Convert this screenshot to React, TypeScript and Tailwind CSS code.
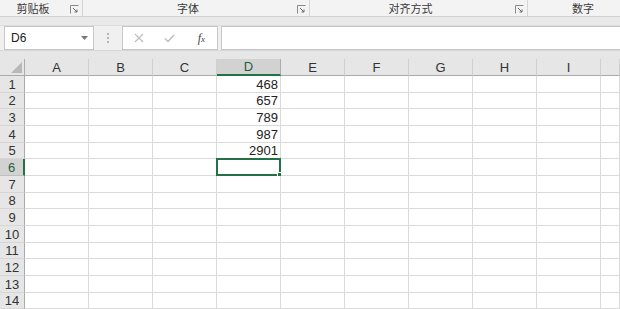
import React from "react";

const cols = ["A", "B", "C", "D", "E", "F", "G", "H", "I", ""];
const rowH = [
  "h-[17px]", "h-[16px]", "h-[17px]", "h-[17px]", "h-[16px]", "h-[17px]", "h-[17px]",
  "h-[16px]", "h-[17px]", "h-[17px]", "h-[16px]", "h-[17px]", "h-[17px]", "h-[16px]",
];
const values: Record<number, string> = { 1: "468", 2: "657", 3: "789", 4: "987", 5: "2901" };

function Launcher() {
  return (
    <svg width="9" height="9" viewBox="0 0 9 9" className="shrink-0">
      <path d="M0.5 8.5V0.5H8.5" fill="none" stroke="#8a8a8a" strokeWidth="1" />
      <path d="M3 3L7 7M7 4.5V7H4.5" fill="none" stroke="#6a6a6a" strokeWidth="1" />
    </svg>
  );
}

function Group({ label, w, launcher = true, last = false }: { label: string; w: string; launcher?: boolean; last?: boolean }) {
  return (
    <div className={`${w} relative flex h-full items-center ${last ? "justify-start pl-[44px]" : "justify-center pr-[16px] border-r border-[#d5d5d5]"}`}>
      <span className="text-[11px] leading-none text-[#3a3a3a]" style={{ fontFamily: '"Noto Sans CJK SC", sans-serif' }}>{label}</span>
      {launcher && (
        <div className="absolute right-[3px] top-[5px]">
          <Launcher />
        </div>
      )}
    </div>
  );
}

export default function App() {
  return (
    <div className="h-[309px] w-[620px] overflow-hidden bg-[#e6e6e6] select-none" style={{ fontFamily: '"Liberation Sans", Arial, sans-serif' }}>
      {/* ribbon group labels */}
      <div className="flex h-[17px] border-b border-[#d2d2d2] bg-[#f3f3f3]">
        <Group label="剪贴板" w="w-[83px]" />
        <Group label="字体" w="w-[227px]" />
        <Group label="对齐方式" w="w-[218px]" />
        <Group label="数字" w="flex-1" launcher={false} last />
      </div>
      <div className="h-[9px] border-b border-[#dcdcdc] bg-[#e9e9e9]" />
      {/* formula bar */}
      <div className="flex h-[24px] items-stretch bg-[#f0f0f0] pl-[4px]">
        <div className="flex w-[90px] items-center justify-between border border-[#c6c6c6] bg-white pl-[6px] pr-[5px]">
          <span className="text-[12px] text-[#222]">D6</span>
          <svg width="7" height="4" viewBox="0 0 7 4"><path d="M0 0H7L3.5 4Z" fill="#777" /></svg>
        </div>
        <div className="flex w-[28px] flex-col items-center justify-center gap-[2px]">
          <div className="h-[2px] w-[2px] bg-[#b5b5b5]" />
          <div className="h-[2px] w-[2px] bg-[#b5b5b5]" />
          <div className="h-[2px] w-[2px] bg-[#b5b5b5]" />
        </div>
        <div className="flex w-[96px] items-center border border-[#c6c6c6] bg-white">
          <div className="flex w-[32px] justify-center">
            <svg width="10" height="10" viewBox="0 0 10 10"><path d="M1 1L9 9M9 1L1 9" stroke="#bdbdbd" strokeWidth="1.2" /></svg>
          </div>
          <div className="flex w-[32px] justify-center">
            <svg width="11" height="9" viewBox="0 0 11 9"><path d="M1 4.5L4 7.5L10 1" fill="none" stroke="#bdbdbd" strokeWidth="1.5" /></svg>
          </div>
          <div className="flex w-[32px] justify-center">
            <span className="text-[12px] italic text-[#444]" style={{ fontFamily: '"Liberation Serif", serif' }}>f<span className="text-[9px]">x</span></span>
          </div>
        </div>
        <div className="ml-[3px] flex-1 border-y border-l border-[#c6c6c6] bg-white" />
      </div>
      <div className="h-[9px] border-t border-[#d6d6d6] bg-[#e6e6e6]" />
      {/* grid */}
      <div className="grid bg-white" style={{ gridTemplateColumns: "25px repeat(9, 64px) 1fr" }}>
        <div className="relative h-[17px] border-b border-r border-[#ababab] bg-[#e6e6e6]">
          <svg className="absolute bottom-[2px] right-[2px]" width="11" height="11" viewBox="0 0 11 11"><path d="M11 0V11H0Z" fill="#b8b8b8" /></svg>
        </div>
        {cols.map((c, i) =>
          c === "D" ? (
            <div key={i} className="flex h-[17px] items-center justify-center border-b-2 border-r border-b-[#217346] border-r-[#ababab] bg-[#d2d2d2] text-[13px] leading-none text-[#1e5f3a]">
              {c}
            </div>
          ) : (
            <div key={i} className="flex h-[17px] items-center justify-center border-b border-r border-b-[#ababab] border-r-[#d0d0d0] bg-[#e6e6e6] text-[13px] leading-none text-[#333]">
              {c}
            </div>
          )
        )}
        {rowH.map((h, r) => {
          const rn = r + 1;
          const sel = rn === 6;
          return (
            <React.Fragment key={rn}>
              <div className={`${h} flex items-center justify-center border-b border-r ${sel ? "border-b-[#c0c0c0] border-r-2 border-r-[#217346] bg-[#d2d2d2] text-[#1e5f3a]" : "border-b-[#d6d6d6] border-r-[#ababab] bg-[#e6e6e6] text-[#333]"} text-[13px] leading-none`}>
                {rn}
              </div>
              {cols.map((c, ci) => (
                <div key={ci} className={`${h} relative flex items-center justify-end border-b border-r border-[#dadada] pr-[2px] text-[13px] leading-none text-[#222]`}>
                  {c === "D" && values[rn]}
                  {c === "D" && sel && (
                    <div className="absolute -left-[1px] -top-[1px] bottom-[-1px] right-[-1px] border-2 border-[#217346]">
                      <div className="absolute -bottom-[3px] -right-[3px] h-[5px] w-[5px] border border-white bg-[#217346]" />
                    </div>
                  )}
                </div>
              ))}
            </React.Fragment>
          );
        })}
      </div>
    </div>
  );
}
